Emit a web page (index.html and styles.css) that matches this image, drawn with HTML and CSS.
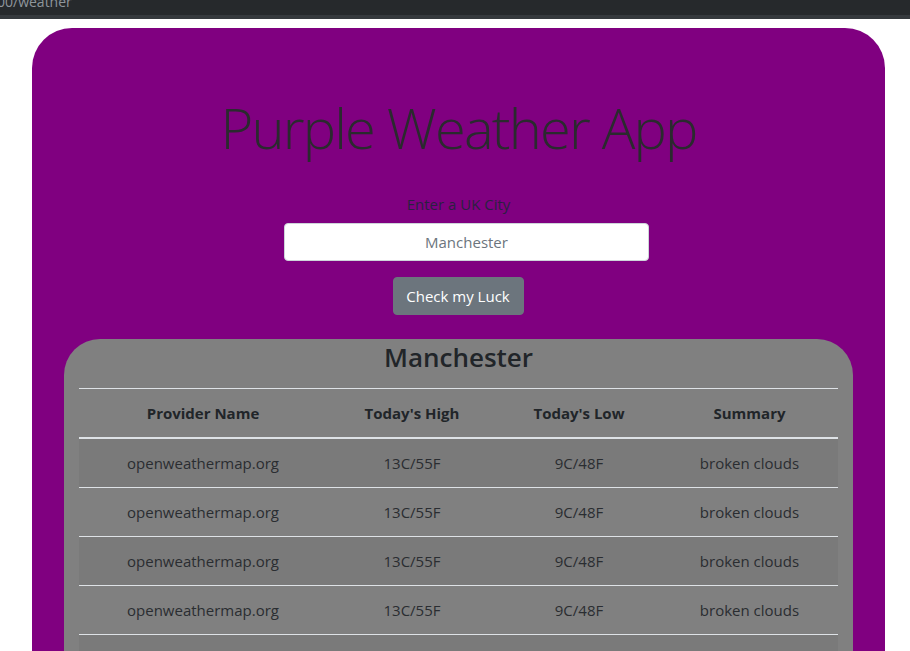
FILE: index.html
```html
<!DOCTYPE html>
<html lang="en">
<head>
<meta charset="utf-8">
<title>Purple Weather App</title>
<link rel="stylesheet" href="styles.css">
</head>
<body>
<div class="browser-bar">
  <div class="url">00/weather</div>
</div>
<div class="browser-line"></div>
<main class="page">
  <section class="app-card">
    <h1 class="app-title">Purple Weather App</h1>
    <form class="city-form">
      <label class="city-label" for="city">Enter a UK City</label>
      <input class="city-input" id="city" type="text" placeholder="Manchester">
      <button class="luck-btn" type="button">Check my Luck</button>
    </form>
    <section class="results">
      <h3 class="results-title">Manchester</h3>
      <table class="weather-table">
        <thead>
          <tr>
            <th class="c1">Provider Name</th>
            <th class="c2">Today's High</th>
            <th class="c3">Today's Low</th>
            <th class="c4">Summary</th>
          </tr>
        </thead>
        <tbody>
          <tr><td>openweathermap.org</td><td>13C/55F</td><td>9C/48F</td><td>broken clouds</td></tr>
          <tr><td>openweathermap.org</td><td>13C/55F</td><td>9C/48F</td><td>broken clouds</td></tr>
          <tr><td>openweathermap.org</td><td>13C/55F</td><td>9C/48F</td><td>broken clouds</td></tr>
          <tr><td>openweathermap.org</td><td>13C/55F</td><td>9C/48F</td><td>broken clouds</td></tr>
          <tr><td>openweathermap.org</td><td>13C/55F</td><td>9C/48F</td><td>broken clouds</td></tr>
        </tbody>
      </table>
    </section>
  </section>
</main>
</body>
</html>
```
FILE: styles.css
```css
* { box-sizing: border-box; }
html, body { margin: 0; padding: 0; }
body {
  background: #ffffff;
  font-family: "Open Sans", "Noto Sans", sans-serif;
  color: #212529;
  overflow: hidden;
  height: 651px;
}
.browser-bar {
  height: 15px;
  background: #26292c;
  overflow: hidden;
}
.url {
  color: #8f969c;
  font-size: 14px;
  line-height: 14px;
  margin-top: -5px;
  margin-left: -3px;
}
.browser-line {
  height: 4px;
  background: #35393d;
}
.page {
  padding: 9px 0 0 32px;
}
.app-card {
  width: 853px;
  background: #800080;
  border-radius: 40px 40px 0 0;
  padding-top: 66px;
  min-height: 700px;
  display: flex;
  flex-direction: column;
  align-items: center;
}
.app-title {
  margin: 0;
  font-size: 56px;
  font-weight: 300;
  line-height: 67px;
  letter-spacing: -1.8px;
  color: #2a2a2e;
}
.city-form {
  margin-top: 31px;
  display: flex;
  flex-direction: column;
  align-items: center;
}
.city-label {
  font-size: 15px;
  line-height: 24px;
  color: #2a2040;
}
.city-input {
  margin-top: 7px;
  margin-left: 16px;
  width: 365px;
  height: 38px;
  border: 1px solid #ced4da;
  border-radius: 4px;
  background: #fff;
  text-align: center;
  font-family: inherit;
  font-size: 15px;
  color: #495057;
  padding: 6px 12px;
}
.city-input::placeholder { color: #6c757d; }
.luck-btn {
  margin-top: 16px;
  margin-left: -1px;
  width: 131px;
  height: 38px;
  border: 1px solid #6c757d;
  border-radius: 4px;
  background: #6c757d;
  color: #fff;
  font-family: inherit;
  font-size: 15px;
  padding: 0;
}
.results {
  margin-top: 24px;
  width: 789px;
  background: #808080;
  border-radius: 36px 36px 0 0;
  padding: 1px 15px 0;
  flex: 1;
}
.results-title {
  margin: 0;
  text-align: center;
  font-size: 26px;
  font-weight: 600;
  line-height: 34px;
  color: #212529;
}
.weather-table {
  margin-top: 14px;
  width: 759px;
  border-collapse: collapse;
  table-layout: fixed;
  font-size: 15px;
  color: #2a2d31;
}
.weather-table th, .weather-table td {
  text-align: center;
  padding: 12px;
  line-height: 24px;
  border-top: 1px solid #dee2e6;
  white-space: nowrap;
}
.weather-table thead th {
  border-bottom: 2px solid #dee2e6;
  font-weight: 700;
  color: #212529;
}
.weather-table tbody tr:first-child td { border-top: 0; }
.weather-table tbody tr:nth-child(odd) { background: #7a7a7a; }
.c1 { width: 248px; }
.c2 { width: 170px; }
.c3 { width: 164px; }
.c4 { width: 177px; }
```
